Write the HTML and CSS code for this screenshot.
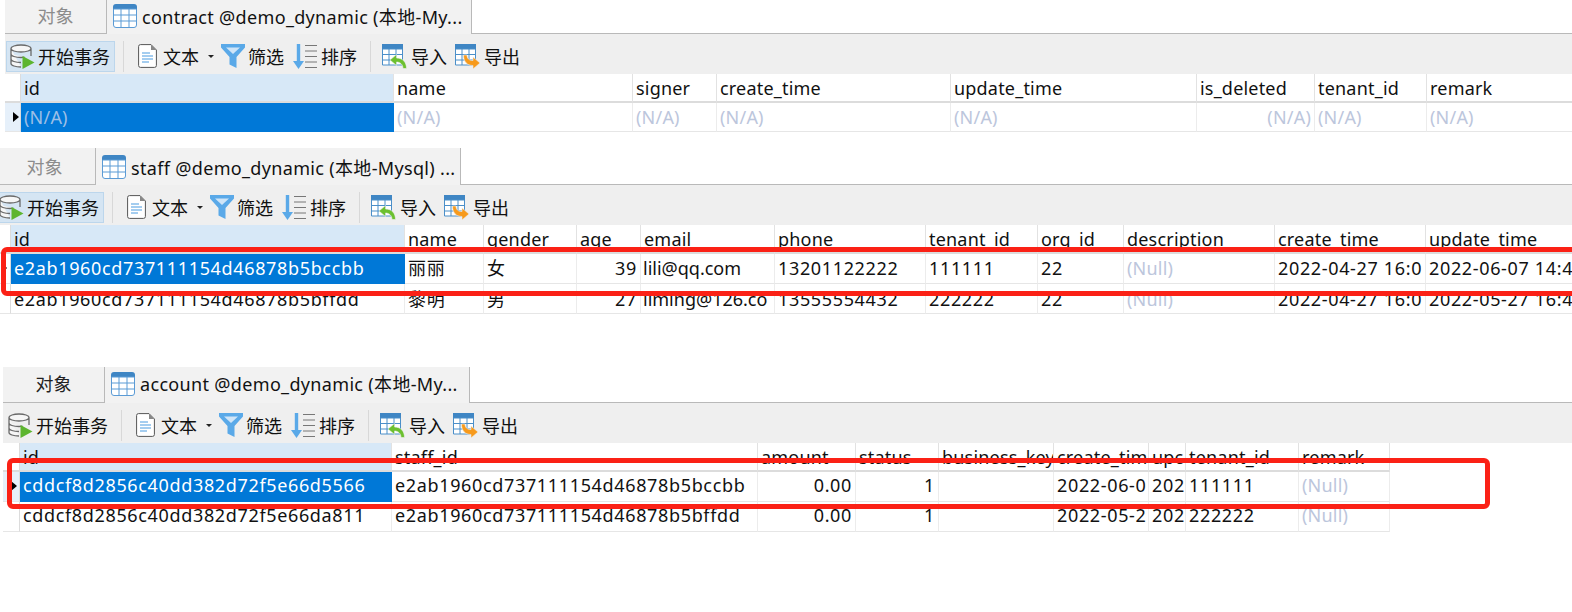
FILE: index.html
```html
<!DOCTYPE html>
<html lang="zh">
<head>
<meta charset="utf-8">
<title>Navicat tables</title>
<link rel="stylesheet" href="styles.css">
</head>
<body>
<svg class="defs" width="0" height="0">
  <symbol id="i-table" viewBox="0 0 24 24">
    <path d="M0 6V3Q0 0 3 0h18q3 0 3 3v3z" fill="#3f86c4"/>
    <path d="M.5 5h23v16q0 2.500-2.500 2.500H3Q.5 23.500.5 21zM8 5v18.500M16 5v18.500M.5 11h23M.5 17h23" fill="#fff" stroke="#5b9bd5"/>
  </symbol>
  <symbol id="i-db" viewBox="0 0 25 25">
    <path d="M1 4.500v15c0 2 4.500 3.500 10 3.500M21 4.500V12M1 4.500C1 2.500 5.500 1 11 1s10 1.500 10 3.500S16.500 8 11 8 1 6.500 1 4.500zM1 10c0 2 4.500 3.500 10 3.500 1.500 0 2.500-.1 3.500-.3M1 15c0 2 4.500 3.500 10 3.500" fill="#f6f6f6" stroke="#6a6a6a" stroke-width="1.300"/>
    <path d="M12.500 12l12 6.500-12 6.500z" fill="#5db52f"/>
  </symbol>
  <symbol id="i-doc" viewBox="0 0 19 24">
    <path d="M.6 2.500Q.6.600 2.500.600H13L18.400 6v15.500q0 1.900-1.900 1.900h-14q-1.900 0-1.900-1.900z" fill="#fff" stroke="#555"/>
    <path d="M13 .6V6h5.400z" fill="#888"/>
    <path d="M4 9h8M4 12h11M4 15h11M4 18h7" stroke="#4a9be0" fill="none"/>
  </symbol>
  <symbol id="i-filter" viewBox="0 0 24 24">
    <path d="M0 0h24v3.500L15.500 13v11l-7-3.500V13L0 3.500z" fill="#5aa9e8"/>
    <path d="M5 3.500h14l-7 6.500z" fill="#cfe5f8"/>
  </symbol>
  <symbol id="i-sort" viewBox="0 0 24 25">
    <path d="M3.800 0h3.400v17H11l-5.500 8L0 17h3.800z" fill="#5aa9e8"/>
    <path d="M12 1.500h12M12 7h12M12 12.500h12M12 18h12M12 23.500h12" stroke="#777" fill="none"/>
  </symbol>
  <symbol id="i-import" viewBox="0 0 25 25">
    <path d="M0 0h21v6H0z" fill="#3f86c4"/>
    <path d="M.5 5h20v16H.5zM7 5v16M14 5v16M.5 10.500h20M.5 16h20" fill="#fff" stroke="#4b8fc9"/>
    <path d="M8 16l6.500-5.500v3.500c6 0 10 4 10 10.500h-3.500c0-4-3-6.500-6.500-6.500v3.500z" fill="#6cc02f" stroke="#efefef" stroke-width=".6"/>
  </symbol>
  <symbol id="i-export" viewBox="0 0 25 25">
    <path d="M0 0h21v6H0z" fill="#3f86c4"/>
    <path d="M.5 5h20v16H.5zM7 5v16M14 5v16M.5 10.500h20M.5 16h20" fill="#fff" stroke="#4b8fc9"/>
    <path d="M8.500 11H12c0 3.500 2 5.500 6 5.500V13l7 6-7 6v-3.500c-6 0-9.500-4-9.500-10.500z" fill="#f79a1c" stroke="#efefef" stroke-width=".6"/>
  </symbol>
</svg>

<main class="page">

<section class="panel panel-contract">
  <div class="tabs">
    <div class="tab tab-object">对象</div>
    <div class="tab tab-table"><svg class="tab-icon"><use href="#i-table"/></svg><span>contract @demo_dynamic (本地-My...</span></div>
  </div>
  <div class="toolbar">
    <div class="begin begin-on"><svg class="ic-db"><use href="#i-db"/></svg>开始事务</div>
    <i class="sep"></i>
    <div class="tool tool-doc"><svg class="ic-doc"><use href="#i-doc"/></svg>文本</div><i class="caret"></i>
    <div class="tool tool-filter"><svg class="ic-24"><use href="#i-filter"/></svg>筛选</div>
    <div class="tool tool-sort"><svg class="ic-sort"><use href="#i-sort"/></svg>排序</div>
    <i class="sep sep-2"></i>
    <div class="tool tool-import"><svg class="ic-io"><use href="#i-import"/></svg>导入</div>
    <div class="tool tool-export"><svg class="ic-io"><use href="#i-export"/></svg>导出</div>
  </div>
  <div class="grid grid-contract">
    <div class="c h mark"></div><div class="c h key">id</div><div class="c h">name</div><div class="c h">signer</div><div class="c h">create_time</div><div class="c h">update_time</div><div class="c h">is_deleted</div><div class="c h">tenant_id</div><div class="c h">remark</div>
    <div class="c mark mark-on"><i class="arrow"></i></div><div class="c sel nil">(N/A)</div><div class="c nil">(N/A)</div><div class="c nil">(N/A)</div><div class="c nil">(N/A)</div><div class="c nil">(N/A)</div><div class="c nil num">(N/A)</div><div class="c nil">(N/A)</div><div class="c nil">(N/A)</div>
  </div>
</section>

<section class="panel panel-staff">
  <div class="tabs">
    <div class="tab tab-object">对象</div>
    <div class="tab tab-table"><svg class="tab-icon"><use href="#i-table"/></svg><span>staff @demo_dynamic (本地-Mysql) ...</span></div>
  </div>
  <div class="toolbar">
    <div class="begin begin-on"><svg class="ic-db"><use href="#i-db"/></svg>开始事务</div>
    <i class="sep"></i>
    <div class="tool tool-doc"><svg class="ic-doc"><use href="#i-doc"/></svg>文本</div><i class="caret"></i>
    <div class="tool tool-filter"><svg class="ic-24"><use href="#i-filter"/></svg>筛选</div>
    <div class="tool tool-sort"><svg class="ic-sort"><use href="#i-sort"/></svg>排序</div>
    <i class="sep sep-2"></i>
    <div class="tool tool-import"><svg class="ic-io"><use href="#i-import"/></svg>导入</div>
    <div class="tool tool-export"><svg class="ic-io"><use href="#i-export"/></svg>导出</div>
  </div>
  <div class="grid grid-staff">
    <div class="c h mark"></div><div class="c h key">id</div><div class="c h">name</div><div class="c h">gender</div><div class="c h">age</div><div class="c h">email</div><div class="c h">phone</div><div class="c h">tenant_id</div><div class="c h">org_id</div><div class="c h">description</div><div class="c h">create_time</div><div class="c h">update_time</div>
    <div class="c mark"><i class="arrow arrow-small"></i></div><div class="c d sel">e2ab1960cd737111154d46878b5bccbb</div><div class="c d">丽丽</div><div class="c d">女</div><div class="c d num">39</div><div class="c mail">lili@qq.com</div><div class="c d">13201122222</div><div class="c d">111111</div><div class="c d">22</div><div class="c nil">(Null)</div><div class="c d">2022-04-27 16:0</div><div class="c d">2022-06-07 14:4</div>
    <div class="c mark"></div><div class="c d low">e2ab1960cd737111154d46878b5bffdd</div><div class="c d low">黎明</div><div class="c d low">男</div><div class="c d low num">27</div><div class="c mail low">liming@126.co</div><div class="c d low">13555554432</div><div class="c d low">222222</div><div class="c d low">22</div><div class="c nil low">(Null)</div><div class="c d low">2022-04-27 16:0</div><div class="c d low">2022-05-27 16:4</div>
  </div>
  <div class="callout callout-staff"></div>
</section>

<section class="panel panel-account">
  <div class="tabs">
    <div class="tab tab-object tab-dark">对象</div>
    <div class="tab tab-table"><svg class="tab-icon"><use href="#i-table"/></svg><span>account @demo_dynamic (本地-My...</span></div>
  </div>
  <div class="toolbar">
    <div class="begin"><svg class="ic-db"><use href="#i-db"/></svg>开始事务</div>
    <i class="sep"></i>
    <div class="tool tool-doc"><svg class="ic-doc"><use href="#i-doc"/></svg>文本</div><i class="caret"></i>
    <div class="tool tool-filter"><svg class="ic-24"><use href="#i-filter"/></svg>筛选</div>
    <div class="tool tool-sort"><svg class="ic-sort"><use href="#i-sort"/></svg>排序</div>
    <i class="sep sep-2"></i>
    <div class="tool tool-import"><svg class="ic-io"><use href="#i-import"/></svg>导入</div>
    <div class="tool tool-export"><svg class="ic-io"><use href="#i-export"/></svg>导出</div>
  </div>
  <div class="grid grid-account">
    <div class="c h mark"></div><div class="c h key">id</div><div class="c h">staff_id</div><div class="c h">amount</div><div class="c h">status</div><div class="c h">business_key</div><div class="c h">create_tim</div><div class="c h">upc</div><div class="c h">tenant_id</div><div class="c h">remark</div>
    <div class="c mark mark-on"><i class="arrow"></i></div><div class="c d sel">cddcf8d2856c40dd382d72f5e66d5566</div><div class="c d">e2ab1960cd737111154d46878b5bccbb</div><div class="c d num">0.00</div><div class="c d num">1</div><div class="c"></div><div class="c d">2022-06-0</div><div class="c d">202</div><div class="c d">111111</div><div class="c nil">(Null)</div>
    <div class="c mark"></div><div class="c d">cddcf8d2856c40dd382d72f5e66da811</div><div class="c d">e2ab1960cd737111154d46878b5bffdd</div><div class="c d num">0.00</div><div class="c d num">1</div><div class="c"></div><div class="c d">2022-05-2</div><div class="c d">202</div><div class="c d">222222</div><div class="c nil">(Null)</div>
  </div>
  <div class="callout callout-account"></div>
</section>

</main>
</body>
</html>
```
FILE: styles.css
```css
* { box-sizing: border-box; }
html, body { margin: 0; height: 612px; overflow: hidden; background: #fff; }
body {
  font-family: "Noto Sans", "Noto Sans CJK SC", sans-serif;
  font-size: 18px;
  color: #111;
}
.defs { display: block; height: 0; }
.page { width: 1572px; height: 612px; overflow: hidden; }

.panel { position: relative; width: 1700px; }
.panel-contract { margin-left: 5px; }
.panel-staff { margin-left: -6px; margin-top: 16px; }
.panel-account { margin-left: 3px; margin-top: 53px; }

.tabs { display: flex; height: 37px; border-bottom: 1px solid #b9b9b9; }
.panel-contract .tabs { height: 34px; }
.panel-account .tabs { height: 36px; }
.tab { display: flex; align-items: center; background: #f2f2f2; margin-bottom: -1px; }
.panel-contract .tab { padding-bottom: 3px; }
.panel-account .tab { padding-bottom: 4px; }
.panel-contract .tab-icon, .panel-account .tab-icon { margin-top: 1px; }
.tab-object {
  width: 102px; justify-content: center; color: #8c8c8c;
  border-right: 1px solid #b9b9b9; border-bottom: 1px solid #b9b9b9;
}
.tab-dark { color: #222; }
.tab-table {
  width: 365px; padding-left: 6px; gap: 5px; letter-spacing: .33px;
  border-right: 1px solid #b9b9b9; white-space: nowrap;
}
.tab-icon { width: 24px; height: 24px; flex: none; }

.toolbar {
  display: flex; align-items: center; height: 40px; padding-top: 4px;
  background: #efefef; white-space: nowrap;
}
.begin {
  display: flex; align-items: center; gap: 4px;
  width: 109px; height: 31px; margin-left: 1px; padding-left: 3px;
  border: 1px solid transparent;
}
.begin-on { background: #d5e5f3; border-color: #bcd6ec; }
.ic-db { width: 25px; height: 25px; flex: none; margin-right: -1px; }
.ic-doc { width: 19px; height: 24px; flex: none; }
.ic-24 { width: 24px; height: 24px; flex: none; }
.ic-sort { width: 24px; height: 25px; flex: none; }
.ic-io { width: 25px; height: 25px; flex: none; }
.sep { width: 1px; height: 31px; margin-left: 8px; background: #d8d8d8; }
.sep-2 { margin-left: 13px; }
.tool { display: flex; align-items: center; gap: 4px; }
.tool-doc { margin-left: 14px; gap: 6px; }
.caret {
  width: 0; height: 0; margin-left: 9px;
  border-left: 3px solid transparent; border-right: 3px solid transparent; border-top: 3px solid #222;
}
.tool-filter { margin-left: 7px; gap: 3px; }
.tool-sort { margin-left: 9px; }
.tool-import { margin-left: 11px; }
.tool-export { margin-left: 8px; }

.grid { display: grid; grid-auto-rows: 30px; }
.grid-contract { grid-template-columns: 16px 373px 239px 84px 234px 246px 118px 112px 400px; grid-template-rows: 29px 29px; }
.grid-staff { grid-template-columns: 17px 394px 79px 93px 64px 134px 151px 112px 86px 151px 151px 200px; grid-template-rows: 29px 30px 30px; }
.grid-account { grid-template-columns: 17px 372px 366px 98px 83px 115px 95px 37px 113px 91px; width: 1387px; grid-template-rows: 29px 30px 30px; }

.c {
  padding: 0 3px; overflow: hidden; white-space: nowrap;
  line-height: 28px; background: #fff;
  border-right: 1px solid #ececec; border-bottom: 1px solid #e6e6e6;
}
.panel-account .c { line-height: 26px; }
.d { letter-spacing: .65px; }
.mail { padding-left: 2px; padding-right: 0; }
.low { padding-top: 1px; }
.h {
  padding-top: 1px; letter-spacing: .2px; line-height: 27px;
  border-bottom: 2px solid #dcdcdc; border-right-color: #e2e2e2;
}
.key { background: #d7e8f7; }
.mark { position: relative; padding: 0; border-right-color: #dcdcdc; }
.mark-on { background: #e6f0fa; }
.sel { background: #0078d7; color: #fff; border-color: #0078d7; }
.nil { color: #bcc6dc; letter-spacing: .2px; }
.sel.nil { color: #9dbfe6; }
.num { text-align: right; }

.arrow {
  position: absolute; left: 8px; top: 9px; width: 0; height: 0;
  border-top: 5px solid transparent; border-bottom: 5px solid transparent; border-left: 6px solid #000;
}
.arrow-small { left: 11px; top: 12px; border-top-width: 2px; border-bottom-width: 2px; border-left-width: 2px; }

.callout { position: absolute; border: 5px solid #fb2116; border-radius: 6px; }
.callout-staff { left: 7px; top: 99px; width: 1700px; height: 49px; }
.callout-account { left: 4px; top: 91px; width: 1483px; height: 51px; }
```
